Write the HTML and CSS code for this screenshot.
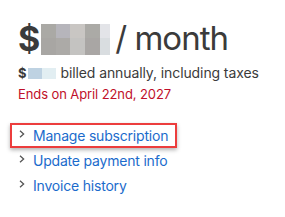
FILE: index.html
```html
<!DOCTYPE html>
<html lang="en">
<head>
    <meta charset="UTF-8">
    <meta name="viewport" content="width=device-width, initial-scale=1.0">
    <title>Subscription</title>
    <link rel="stylesheet" href="styles.css">
</head>
<body>
    <div class="plan">
        <!-- Price line, amount is blurred -->
        <div class="price">
            <span class="dollar">$</span>
            <span class="blur big">
                <i style="background:#aaa9a5"></i><i style="background:#b6b5bb"></i><i style="background:#c9c6c3"></i><i style="background:#abaaa6"></i><i style="background:#e3e4e8"></i>
                <i style="background:#a8a6a3"></i><i style="background:#acaaa7"></i><i style="background:#c4c3c1"></i><i style="background:#a9a6a4"></i><i style="background:#d9dde0"></i>
            </span>
            <span class="per">/ month</span>
        </div>

        <p class="billed">
            <span class="dollar-sm">$</span><span class="blur small"><i style="background:#bed2e2"></i><i style="background:#e2eef2"></i></span>
            <span class="billed-text">billed annually, including taxes</span>
        </p>
        <p class="ends">Ends on April 22nd, 2027</p>

        <ul class="links">
            <li class="highlight">
                <svg class="chev" width="6" height="8" viewBox="0 0 6 8"><polyline points="1,0.8 4.6,4 1,7.2" fill="none" stroke="#555" stroke-width="1.3"/></svg>
                <a href="#">Manage subscription</a>
            </li>
            <li>
                <svg class="chev" width="6" height="8" viewBox="0 0 6 8"><polyline points="1,0.8 4.6,4 1,7.2" fill="none" stroke="#555" stroke-width="1.3"/></svg>
                <a href="#">Update payment info</a>
            </li>
            <li>
                <svg class="chev" width="6" height="8" viewBox="0 0 6 8"><polyline points="1,0.8 4.6,4 1,7.2" fill="none" stroke="#555" stroke-width="1.3"/></svg>
                <a href="#">Invoice history</a>
            </li>
        </ul>
    </div>
</body>
</html>
```

FILE: styles.css
```css
* {
    box-sizing: border-box;
    margin: 0;
    padding: 0;
}

body {
    background: #fff;
    font-family: Inter, "Liberation Sans", sans-serif;
    color: #3b3b3b;
}

.plan {
    padding: 22px 0 0 18px;
}

/* Price */
.price {
    display: flex;
    align-items: flex-start;
    height: 33px;
}

.dollar {
    font-size: 34px;
    font-weight: bold;
    line-height: 33px;
    margin-right: 1px;
}

.per {
    font-size: 33px;
    line-height: 33px;
    letter-spacing: -1px;
    margin-left: 5px;
}

.blur {
    display: inline-grid;
}

.blur i {
    display: block;
}

.blur.big {
    grid-template-columns: 15px 14px 15px 15px 10px;
    grid-template-rows: 14px 17px;
    margin-top: 2px;
}

.blur.small {
    grid-template-columns: 14px 14px;
    grid-template-rows: 11px;
    vertical-align: -1px;
    margin: 0 1px 0 1px;
}

.billed {
    margin-top: 10px;
    font-size: 14px;
    line-height: 16px;
}

.billed-text {
    letter-spacing: -0.1px;
}

.dollar-sm {
    font-weight: bold;
    font-size: 13px;
}

.ends {
    margin-top: 5px;
    font-size: 13px;
    line-height: 16px;
    letter-spacing: -0.1px;
    color: #c0102a;
}

/* Links */
.links {
    list-style: none;
    margin-top: 21px;
}

.links li {
    display: flex;
    align-items: center;
    height: 25px;
    font-size: 14px;
    letter-spacing: -0.2px;
}

.links a {
    color: #1b6bcc;
    text-decoration: none;
}

.chev {
    margin: -3px 8px 0 1px;
}

.highlight {
    border: 2px solid #ec3d3d;
    margin-left: -8px;
    padding-left: 6px;
    width: 167px;
    box-shadow: 0 2px 4px rgba(0, 0, 0, 0.3);
}
```
